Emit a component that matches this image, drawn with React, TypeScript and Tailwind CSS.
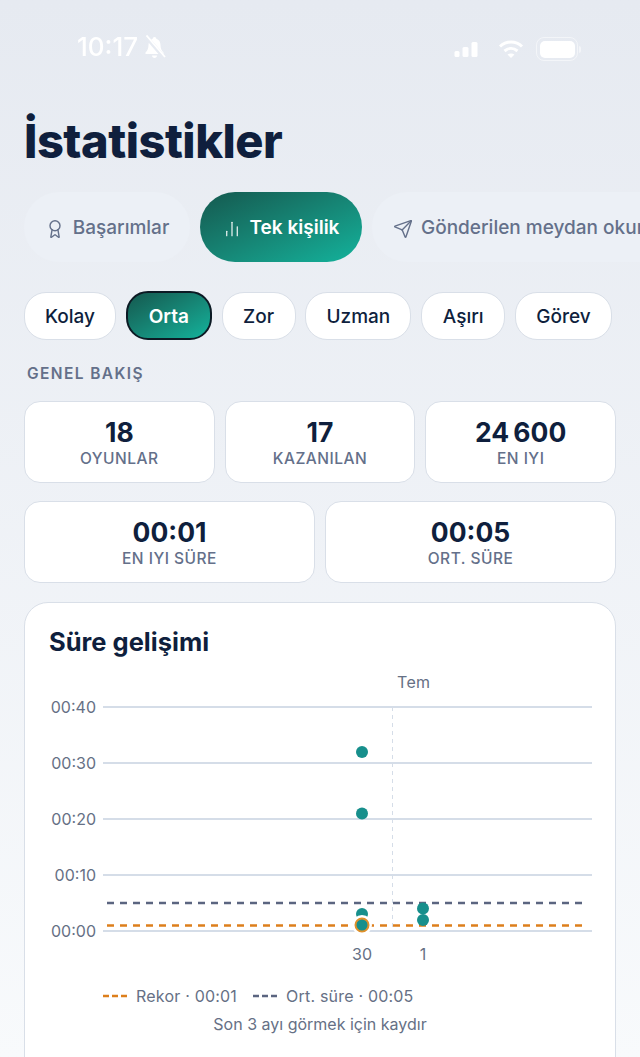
import { Award, ChartNoAxesColumn, Send } from "lucide-react";

const chips = [
  { label: "Kolay", w: "w-[92px]" },
  { label: "Orta", w: "w-[86px]", active: true },
  { label: "Zor", w: "w-[74px]" },
  { label: "Uzman", w: "w-[106px]" },
  { label: "Aşırı", w: "w-[84px]" },
  { label: "Görev", w: "w-[97px]" },
];

const font = "Inter, sans-serif";

function StatCard({ value, label }: { value: string; label: string }) {
  return (
    <div className="flex h-[82px] flex-col items-center rounded-[16px] border-[1.5px] border-[#d9dfe8] bg-white pt-[13px]">
      <div className="text-[26.5px] leading-[34px] font-bold text-[#0f1f3d]">{value}</div>
      <div className="text-[15.5px] leading-[19px] font-medium tracking-[0.5px] text-[#64708a]">{label}</div>
    </div>
  );
}

function StatusBar() {
  return (
    <div className="flex h-[96px] items-start justify-between pt-[33px] pl-[77px] pr-[59px] text-white blur-[0.4px]">
      <div className="flex items-center gap-[5px]">
        <span className="text-[26px] leading-[28px] font-medium">10:17</span>
        <svg width="23" height="24" viewBox="0 0 23 24" fill="white">
          <path d="M11.500 2C10.500 2 9.700 2.800 9.700 3.700C7 4.500 5.500 7 5.500 10C5.500 13.500 4.500 15.500 2.500 17.500V19H20.500V17.500C18.500 15.500 17.500 13.500 17.500 10C17.500 7 16 4.500 13.300 3.700C13.300 2.800 12.500 2 11.500 2Z" />
          <path d="M9 20.500H14C14 22 12.900 23 11.500 23S9 22 9 20.500Z" />
          <path d="M2.500 1L21.500 23" stroke="#e7ebf2" strokeWidth="4" />
          <path d="M3.500 0.500L22 22" stroke="white" strokeWidth="1.800" />
        </svg>
      </div>
      <div className="mt-[4px] flex items-center">
        <svg width="26" height="18" viewBox="0 0 26 18" fill="white" className="mr-[18px]">
          <rect x="0.500" y="11" width="5" height="6" rx="1.500" />
          <rect x="8.500" y="7" width="6" height="10" rx="1.500" opacity="0.95" />
          <rect x="17.500" y="2" width="6" height="15" rx="1.500" />
        </svg>
        <svg width="26" height="20" viewBox="0 0 26 20" fill="none" stroke="white" strokeWidth="3" className="mr-[12px]">
          <path d="M2 7.500C8 1.500 18 1.500 24 7.500" />
          <path d="M6.500 12C10.500 8.500 15.500 8.500 19.500 12" />
          <path d="M13 19L9.500 15.500C11.500 14 14.500 14 16.500 15.500z" fill="white" stroke="none" />
        </svg>
        <div className="flex items-center">
          <div className="flex h-[24px] w-[42px] items-center justify-center rounded-[8px] border border-white/50">
            <div className="h-[17px] w-[35px] rounded-[5px] bg-white" />
          </div>
          <div className="ml-[1px] h-[7px] w-[2px] rounded-r bg-white/50" />
        </div>
      </div>
    </div>
  );
}

function LegendDash({ color }: { color: string }) {
  return (
    <svg width="24" height="4" viewBox="0 0 24 4" className="mr-[9px] shrink-0">
      <line x1="0" x2="24" y1="2" y2="2" stroke={color} strokeWidth="2.500" strokeDasharray="6 3" />
    </svg>
  );
}

function Chart() {
  const grid = [
    { y: 707, label: "00:40" },
    { y: 763, label: "00:30" },
    { y: 819, label: "00:20" },
    { y: 875, label: "00:10" },
    { y: 931, label: "00:00" },
  ];
  const dots = [
    [362, 752],
    [362, 813.500],
    [362, 914],
    [423, 908.500],
    [423, 920],
  ];
  return (
    <svg
      width="592"
      height="300"
      viewBox="25 670 592 300"
      className="mt-[11px] -ml-[24px] block"
      fontFamily={font}
    >
      {grid.map((g) => (
        <g key={g.y}>
          <line x1="103" x2="592" y1={g.y} y2={g.y} stroke="#d5dde8" strokeWidth="2" />
          <text x="96" y={g.y + 6} textAnchor="end" fontSize="16" fill="#667085">
            {g.label}
          </text>
        </g>
      ))}
      <line x1="392.500" x2="392.500" y1="707" y2="928" stroke="#d5dde8" strokeWidth="1" strokeDasharray="4 4" />
      <text x="397" y="688" fontSize="16" fill="#667085" letterSpacing="0.3">Tem</text>
      <line x1="107" x2="588" y1="903" y2="903" stroke="#5b6580" strokeWidth="2.500" strokeDasharray="7 6" />
      <line x1="107" x2="588" y1="925.500" y2="925.500" stroke="#dd7f1c" strokeWidth="2.500" strokeDasharray="7 6" />
      {dots.map(([cx, cy]) => (
        <circle key={`${cx}-${cy}`} cx={cx} cy={cy} r="6" fill="#178f8c" />
      ))}
      <circle cx="362" cy="925" r="10" fill="white" />
      <circle cx="362" cy="925" r="6.500" fill="#178f8c" stroke="#e0902a" strokeWidth="2" />
      <text x="362" y="960" textAnchor="middle" fontSize="16" fill="#667085">30</text>
      <text x="423" y="960" textAnchor="middle" fontSize="16" fill="#667085">1</text>
    </svg>
  );
}

export default function App() {
  return (
    <div
      className="h-[1057px] w-[640px] overflow-hidden bg-gradient-to-b from-[#e6eaf1] to-[#f8fafc]"
      style={{ fontFamily: font }}
    >
      <StatusBar />

      <h1 className="mt-[19px] mb-[25px] px-[24px] text-[47px] leading-[52px] font-extrabold tracking-[-0.5px] text-[#0f1f3d]">
        İstatistikler
      </h1>

      {/* Tabs */}
      <div className="flex gap-[10px] overflow-hidden pl-[24px]">
        <div className="flex h-[70px] w-[166px] shrink-0 items-center justify-center gap-[8px] rounded-full bg-[#ecf0f6] pt-[3px] text-[19px] font-medium text-[#64708a]">
          <Award size={20} strokeWidth={1.700} />
          Başarımlar
        </div>
        <div className="flex h-[70px] w-[162px] shrink-0 items-center justify-center gap-[9px] rounded-full bg-gradient-to-br from-[#14594f] to-[#12b39c] pt-[3px] text-[19px] font-semibold text-white">
          <ChartNoAxesColumn size={18} strokeWidth={1.500} />
          Tek kişilik
        </div>
        <div className="flex h-[70px] shrink-0 items-center gap-[8px] rounded-full bg-[#ecf0f6] pt-[3px] pr-[24px] pl-[21px] text-[19px] font-medium whitespace-nowrap text-[#64708a]">
          <Send size={20} strokeWidth={1.700} />
          Gönderilen meydan okumalar
        </div>
      </div>

      {/* Difficulty chips */}
      <div className="mt-[30px] flex gap-[9.8px] px-[24px]">
        {chips.map((c) =>
          c.active ? (
            <div
              key={c.label}
              className={`-mt-[1px] flex h-[49px] ${c.w} items-center justify-center rounded-[22px] border-2 border-[#0c1a24] bg-gradient-to-br from-[#14594f] to-[#12b39c] pt-[3px] text-[19px] font-semibold text-white`}
            >
              {c.label}
            </div>
          ) : (
            <div
              key={c.label}
              className={`flex h-[48px] ${c.w} items-center justify-center rounded-[22px] border-[1.5px] border-[#d9dfe8] bg-white pt-[3px] text-[19px] font-medium text-[#0f1f3d]`}
            >
              {c.label}
            </div>
          ),
        )}
      </div>

      <div className="mt-[24px] pl-[27px] text-[15.500px] leading-[20px] font-semibold tracking-[1.400px] text-[#64708a]">
        GENEL BAKIŞ
      </div>

      {/* Stats */}
      <div className="mt-[17px] grid grid-cols-3 gap-[10px] px-[24px]">
        <StatCard value="18" label="OYUNLAR" />
        <StatCard value="17" label="KAZANILAN" />
        <StatCard value={"24\u202F600"} label="EN IYI" />
      </div>
      <div className="mt-[18px] grid grid-cols-2 gap-[10px] px-[24px]">
        <StatCard value="00:01" label="EN IYI SÜRE" />
        <StatCard value="00:05" label="ORT. SÜRE" />
      </div>

      {/* Chart card */}
      <div className="mx-[24px] mt-[19px] h-[480px] rounded-[24px] border-[1.5px] border-[#d9dfe8] bg-white px-[24px] pt-[22px]">
        <h2 className="text-[25.500px] leading-[34px] font-bold text-[#0f1f3d]">Süre gelişimi</h2>
        <Chart />
        <div className="mt-[16px] flex items-center pl-[54px] text-[16px] leading-[20px] tracking-[0.2px] text-[#667085]">
          <LegendDash color="#dd7f1c" />
          Rekor · 00:01
          <span className="w-[16px]" />
          <LegendDash color="#5b6580" />
          Ort. süre · 00:05
        </div>
        <div className="mt-[8px] text-center text-[16px] leading-[20px] text-[#667085]">
          Son 3 ayı görmek için kaydır
        </div>
      </div>
    </div>
  );
}
